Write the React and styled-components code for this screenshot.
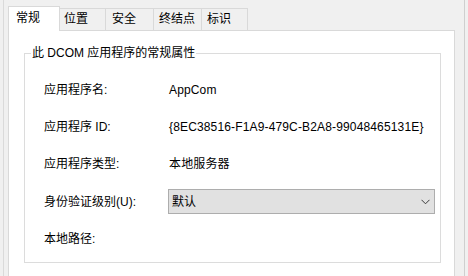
import React from "react";
import styled, { createGlobalStyle } from "styled-components";

const GlobalStyle = createGlobalStyle`
  html, body { margin: 0; padding: 0; background: #f0f0f0; }
  body {
    font-family: "Liberation Sans", "Noto Sans CJK SC", sans-serif;
    font-size: 12px;
    color: #000;
  }
  * { box-sizing: border-box; }
`;

const Frame = styled.div`
  width: 468px;
  height: 276px;
  overflow: hidden;
  background: #f0f0f0;
  padding-left: 3px;
`;

const Dialog = styled.div`
  width: 462px;
  height: 290px;
  border-left: 1px solid #dadada;
  border-right: 1px solid #cfcfcf;
  padding: 0 9px 0 4px;
  display: flex;
  flex-direction: column;
`;

const TabStrip = styled.div`
  display: flex;
  align-items: flex-end;
  height: 30px;
  flex: none;
`;

const Tab = styled.div`
  width: ${(p) => p.$w}px;
  height: ${(p) => (p.$active ? 25 : 22)}px;
  margin-bottom: ${(p) => (p.$active ? -1 : 0)}px;
  position: relative;
  z-index: ${(p) => (p.$active ? 1 : 0)};
  background: ${(p) => (p.$active ? "#fff" : "#f0f0f0")};
  border-top: 1px solid #d9d9d9;
  border-right: 1px solid #d9d9d9;
  border-left: ${(p) => (p.$active ? "1px solid #d9d9d9" : "none")};
  padding: ${(p) => (p.$active ? "3px 0 0 7px" : "2px 0 0 " + p.$pl + "px")};
  line-height: 16px;
  white-space: nowrap;
`;

const Panel = styled.div`
  width: 447px;
  height: 260px;
  flex: none;
  background: #fff;
  border: 1px solid #d9d9d9;
  padding: 14px 13px 0 15px;
`;

const Group = styled.fieldset`
  margin: 0;
  padding: 0;
  height: 218px;
  border: 1px solid #dcdcdc;
  min-width: 0;
`;

const Legend = styled.legend`
  margin-left: 6px;
  padding: 0 1px;
  line-height: 16px;
`;

const Grid = styled.div`
  display: grid;
  grid-template-columns: 125px 1fr;
  grid-template-rows: 24px 24px 24px 25px 24px;
  row-gap: 13px;
  align-items: center;
  padding: 17px 5px 0 19px;
`;

const Label = styled.div`
  line-height: 16px;
  white-space: nowrap;
`;

const Value = styled.div`
  line-height: 16px;
  white-space: nowrap;
  letter-spacing: 0.15px;
`;

const Select = styled.div`
  height: 25px;
  margin-left: -1px;
  background: #e1e1e1;
  border: 1px solid #adadad;
  display: flex;
  align-items: center;
  justify-content: space-between;
  padding: 0 4px 0 3px;
  line-height: 16px;
`;

const Chevron = () => (
  <svg width="9" height="6" viewBox="0 0 9 6" style={{ display: "block" }}>
    <path d="M0.5 0.8 L4.5 4.8 L8.5 0.8" fill="none" stroke="#3a3a3a" strokeWidth="1" />
  </svg>
);

const tabs = [
  { name: "常规", w: 52, active: true },
  { name: "位置", w: 46, pl: 4 },
  { name: "安全", w: 48, pl: 6 },
  { name: "终结点", w: 48, pl: 5 },
  { name: "标识", w: 46, pl: 5 },
];

export default function App() {
  return (
    <>
      <GlobalStyle />
      <Frame>
        <Dialog>
          <TabStrip>
            {tabs.map((t) => (
              <Tab key={t.name} $w={t.w} $active={t.active} $pl={t.pl}>
                {t.name}
              </Tab>
            ))}
          </TabStrip>
          <Panel>
            <Group>
              <Legend>此 DCOM 应用程序的常规属性</Legend>
              <Grid>
                <Label>应用程序名:</Label>
                <Value>AppCom</Value>
                <Label>应用程序 ID:</Label>
                <Value>{"{8EC38516-F1A9-479C-B2A8-99048465131E}"}</Value>
                <Label>应用程序类型:</Label>
                <Value>本地服务器</Value>
                <Label>身份验证级别(U):</Label>
                <Select>
                  <span>默认</span>
                  <Chevron />
                </Select>
                <Label>本地路径:</Label>
                <Value />
              </Grid>
            </Group>
          </Panel>
        </Dialog>
      </Frame>
    </>
  );
}
